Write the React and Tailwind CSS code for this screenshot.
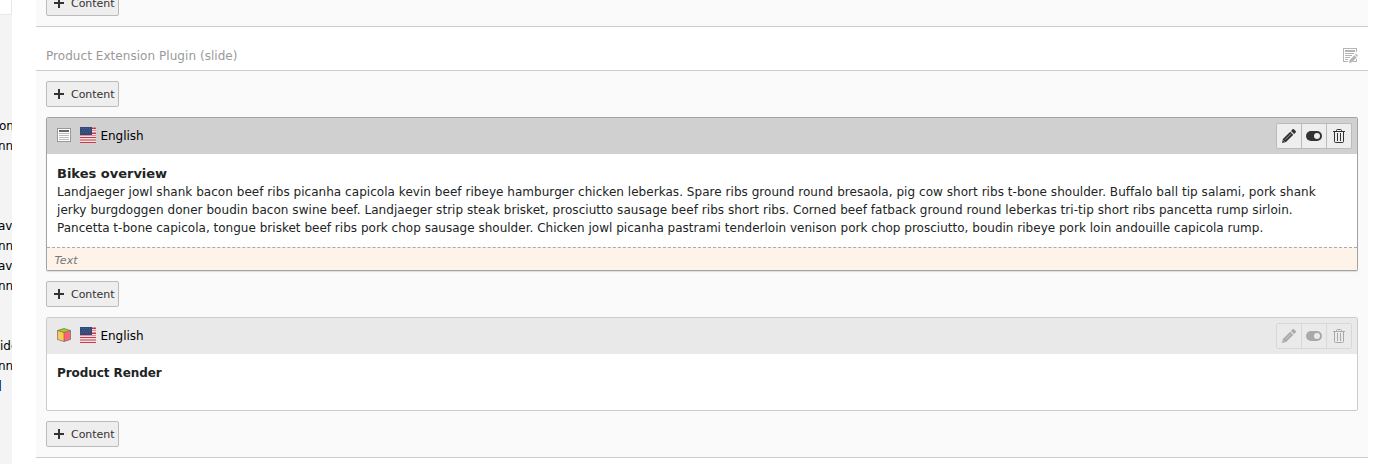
import React from 'react';

const treeRows = [
  { text: 'on', cls: 'mt-[101px] -ml-px' },
  { text: 'nn', cls: '-ml-[2px]' },
  { text: 'av', cls: 'mt-[60px] -ml-[2px]' },
  { text: 'nn', cls: '-ml-[2px]' },
  { text: 'av', cls: '-ml-[2px]' },
  { text: 'nn', cls: '-ml-[2px]' },
  { text: 'ide', cls: 'mt-[40px] ml-0' },
  { text: 'nn', cls: '-ml-[2px]' },
  { text: ']', cls: '-ml-[3px]' },
];

function ContentButton({ className = '' }) {
  return (
    <button className={`flex h-[26px] w-[73px] shrink-0 items-center rounded-[2px] border border-[#bbb] bg-[#eee] pl-[7px] text-[11px] text-[#333] ${className}`}>
      <svg width="10" height="10" viewBox="0 0 10 10" className="mr-[7px] shrink-0">
        <path d="M4 0h2v4h4v2H6v4H4V6H0V4h4z" fill="#333" />
      </svg>
      <span className="pt-[2px] tracking-[-0.02px]">Content</span>
    </button>
  );
}

function Flag() {
  return (
    <svg width="16" height="16" viewBox="0 0 16 16" className="mb-[2px] shrink-0" shapeRendering="crispEdges">
      <path fill="#f5dfe1" d="M0 0h16v16H0z" />
      <path fill="#dc8d96" d="M12 0h4v2h-4zM12 3h4v1h-4zM12 5h4v2h-4zM0 8h16v1H0zM0 12h16v2H0z" />
      <path fill="#c43c4c" d="M12 1h4v1h-4zM12 6h4v1h-4zM0 10h16v1H0zM0 15h16v1H0z" />
      <path fill="#304a77" d="M0 0h12v8H0z" />
      <path fill="#49618a" d="M1 1h1v1H1zM3 1h1v1H3zM5 1h1v1H5zM7 1h1v1H7zM9 1h1v1H9zM2 3h1v1H2zM4 3h1v1H4zM6 3h1v1H6zM8 3h1v1H8zM10 3h1v1h-1zM1 5h1v1H1zM3 5h1v1H3zM5 5h1v1H5zM7 5h1v1H7zM9 5h1v1H9z" />
    </svg>
  );
}

function TextIcon() {
  return (
    <svg width="16" height="16" viewBox="0 0 16 16" className="mb-[2px] shrink-0" shapeRendering="crispEdges">
      <path fill="#999" d="M1 1h14v14H1z" />
      <path fill="#fff" d="M2 2h12v12H2z" />
      <path fill="#666" d="M3 3h10v2H3z" />
      <path fill="#b9b9b9" d="M3 6h10v1H3zM3 8h10v1H3zM3 10h10v1H3zM3 12h10v1H3z" />
    </svg>
  );
}

function CubeIcon() {
  return (
    <svg width="16" height="16" viewBox="0 0 16 16" className="mb-[2px] shrink-0">
      <path fill="#ffc857" d="M1.500 3.500 8 5.500v9L1.500 12.500z" />
      <path fill="#ff5f78" d="M14.500 3.500 8 5.500v9l6.500-2z" />
      <path fill="#a4d007" d="M1.500 3.500 8 1.500l6.500 2L8 5.500z" />
      <path fill="none" stroke="#666" strokeOpacity=".65" strokeLinejoin="round" d="M1.500 3.500 8 1.500l6.500 2v9L8 14.500l-6.500-2zL8 5.500l6.500-2M8 5.500v9" />
    </svg>
  );
}

function Pencil() {
  return (
    <svg width="16" height="16" viewBox="0 0 16 16">
      <path fill="currentColor" d="m1 15 .9-4L9.200 3.700l3.100 3.100L5 14.100zM10 2.900l1.600-1.600c.4-.4.9-.4 1.300 0l1.800 1.800c.4.400.4.900 0 1.300L13.100 6z" />
      <path stroke="#eee" strokeWidth=".7" opacity=".75" d="m4.200 11.600 6-6M2.300 12.200l1.500 1.500" />
    </svg>
  );
}

function Toggle() {
  return (
    <svg width="16" height="16" viewBox="0 0 16 16">
      <rect y="3" width="16" height="10" rx="5" fill="currentColor" />
      <circle cx="11" cy="8" r="3" fill="#eee" />
    </svg>
  );
}

function Trash() {
  return (
    <svg width="16" height="16" viewBox="0 0 16 16" fill="none" stroke="currentColor">
      <path d="M2 3.500h12M5.500 3V2.500q0-1 1-1h3q1 0 1 1V3M3.500 4v9.500q0 1 1 1h7q1 0 1-1V4M6.500 5v8M9.500 5v8" />
    </svg>
  );
}

function Actions({ faded }) {
  const cell = 'flex shrink-0 items-center justify-center';
  return (
    <div className={`ml-auto flex h-[26px] w-[76px] rounded-[2px] border border-[#bbb] bg-[#eee] text-[#333] ${faded ? 'opacity-35' : ''}`}>
      <div className={`${cell} w-6`}><Pencil /></div>
      <div className={`${cell} w-[26px] border-x border-[#bbb]`}><Toggle /></div>
      <div className={`${cell} w-6`}><Trash /></div>
    </div>
  );
}

function PageEdit() {
  return (
    <svg width="16" height="16" viewBox="0 0 16 16" className="mb-[2px] ml-auto" fill="#b5b5b5">
      <path d="M1 1h14v4h-1V2H2v12h4v1H1z" />
      <path d="M3 3h10v2H3zM3 6h9v1H3zM3 8h7v1H3zM3 10h5v1H3zM3 12h3v1H3zM14 12h1v3h-4v-1h3z" />
      <path d="m7 16 .7-3 4.700-4.700 2.200 2.200L10 15.200zM13 7.700l1-1 2 2-1 1z" />
    </svg>
  );
}

export default function App() {
  return (
    <div className="flex h-[464px] w-[1374px] overflow-hidden bg-white font-['DejaVu_Sans','Verdana',sans-serif] text-[12px] text-[#212424]">
      <aside className="h-full w-3 shrink-0 overflow-hidden bg-[#f4f4f4] text-black">
        <div className="h-[15px] border-r border-b border-[#e8e8e8] bg-white" />
        {treeRows.map((r, i) => (
          <div key={i} className={`h-5 leading-5 whitespace-nowrap ${r.cls}`}>{r.text}</div>
        ))}
      </aside>
      <main className="ml-6 flex w-[1332px] shrink-0 flex-col">
        <section className="h-[27px] shrink-0 border-b border-[#ccc] bg-[#fafafa] px-[10px]">
          <ContentButton className="-mt-[10px]" />
        </section>
        <header className="flex h-11 shrink-0 items-center border-b border-[#ccc] pt-[15px] pr-[10px] pl-[10px] text-[#999]">
          <span className="tracking-[0.05px]">Product Extension Plugin (slide)</span>
          <PageEdit />
        </header>
        <section className="flex h-[387px] shrink-0 flex-col gap-[10px] border-b border-[#ccc] bg-[#fafafa] p-[10px]">
          <ContentButton />
          <article className="h-[154px] shrink-0 overflow-hidden rounded-[2px] border border-[#a3a3a3] bg-white shadow-[0_1px_1px_rgba(0,0,0,0.12)]">
            <div className="flex h-9 items-center bg-[#d0d0d0] pr-[5px] pl-[9px] text-black">
              <TextIcon />
              <span className="w-2" />
              <Flag />
              <span className="ml-[4.500px] tracking-[-0.05px]">English</span>
              <Actions />
            </div>
            <div className="h-[93px] pt-[11px] pl-[10px] leading-[18px] whitespace-nowrap">
              <h2 className="h-[18px] text-[13px] font-bold">Bikes overview</h2>
              <p className="tracking-[0.040px]">Landjaeger jowl shank bacon beef ribs picanha capicola kevin beef ribeye hamburger chicken leberkas. Spare ribs ground round bresaola, pig cow short ribs t-bone shoulder. Buffalo ball tip salami, pork shank</p>
              <p className="tracking-[0.048px]">jerky burgdoggen doner boudin bacon swine beef. Landjaeger strip steak brisket, prosciutto sausage beef ribs short ribs. Corned beef fatback ground round leberkas tri-tip short ribs pancetta rump sirloin.</p>
              <p className="tracking-[0.014px]">Pancetta t-bone capicola, tongue brisket beef ribs pork chop sausage shoulder. Chicken jowl picanha pastrami tenderloin venison pork chop prosciutto, boudin ribeye pork loin andouille capicola rump.</p>
            </div>
            <div className="flex h-[23px] items-center border-t border-dashed border-[#aaa] bg-[#fef3e9] pt-[5px] pl-[7.500px] text-[11px] text-[#777] italic">Text</div>
          </article>
          <ContentButton />
          <article className="h-[94px] shrink-0 overflow-hidden rounded-[2px] border border-[#ccc] bg-white">
            <div className="flex h-9 items-center bg-[#e9e9e9] pr-[5px] pl-[9px] text-black">
              <CubeIcon />
              <span className="w-2" />
              <Flag />
              <span className="ml-[4.500px] tracking-[-0.05px]">English</span>
              <Actions faded />
            </div>
            <h2 className="pt-[10px] pl-[10px] text-[12px] leading-[18px] font-bold tracking-[-0.07px]">Product Render</h2>
          </article>
          <ContentButton />
        </section>
      </main>
    </div>
  );
}
